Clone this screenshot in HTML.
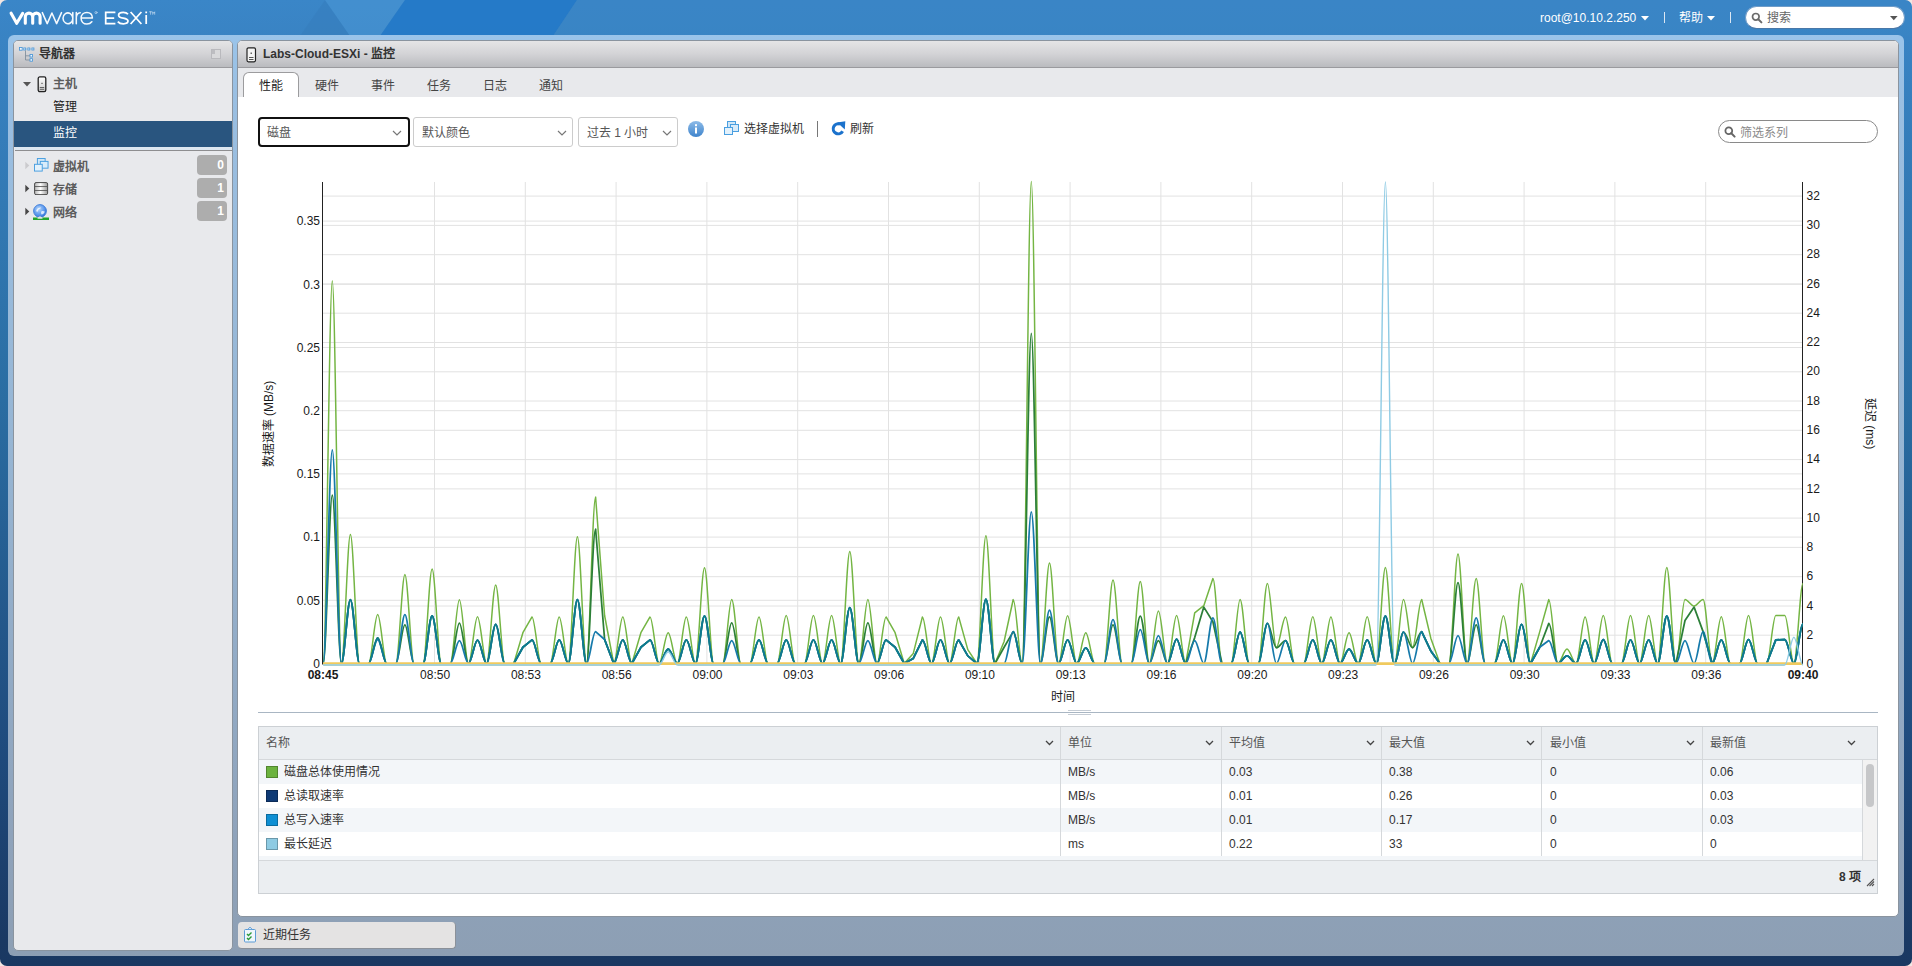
<!DOCTYPE html>
<html lang="zh-CN">
<head>
<meta charset="utf-8">
<title>Labs-Cloud-ESXi - VMware ESXi</title>
<style>
*{box-sizing:border-box;margin:0;padding:0}
html{background:#f3e6e2;font-family:"Liberation Sans",sans-serif}
body{width:1912px;height:966px;position:relative;overflow:hidden;font-family:"Liberation Sans",sans-serif;font-size:12px;color:#333;
 background:linear-gradient(180deg,#3a86c8 0px,#3983c3 40px,#2a6da2 400px,#1f4a7c 760px,#1a3963 940px,#1a3862 966px);border-radius:7px}
.abs{position:absolute}
.t{position:absolute;white-space:nowrap;line-height:14px;height:14px}
/* header */
#hdrbg{left:0;top:0;width:1912px;height:36px;border-radius:7px 7px 0 0;overflow:hidden}
#frame{left:8px;top:35px;width:1896px;height:921px;border-radius:6px;
 background:linear-gradient(180deg,#9ac4ea 0px,#9abfe2 60px,#97b6d4 400px,#8fa3bb 800px,#8d9fb4 921px)}
/* nav */
#nav{left:13px;top:40px;width:220px;height:911px;background:#e8e9ec;border-radius:5px;border:1px solid #8a949f;overflow:hidden}
.phdr{background:linear-gradient(180deg,#e5e5e6 0%,#d3d3d6 50%,#babbbf 100%);border-bottom:1px solid #9a9a9e}
#navh{left:0;top:0;width:218px;height:27px}
#sel{left:0;top:80px;width:218px;height:26px;background:#29557f}
.badge{position:absolute;left:182px;width:30px;height:20px;border-radius:4px;background:#adadad;color:#fff;font-weight:bold;font-size:12px;line-height:20px;text-align:right;padding-right:3px}
.nb{font-weight:bold;color:#5c5c5c}
/* main */
#main{left:237px;top:40px;width:1662px;height:877px;background:#fff;border-radius:5px;overflow:hidden;border:1px solid #8a949f}
#mainh{left:0;top:0;width:1660px;height:27px}
#tabs{left:0;top:27px;width:1660px;height:29px;background:#e8e9ec}
#tabact{left:5px;top:31px;width:56px;height:25px;background:#fff;border:1px solid #9c9c9e;border-bottom:none;border-radius:6px 6px 0 0}
.dd{position:absolute;top:117px;height:30px;border:1px solid #ccc;border-radius:3px;background:#fff}
/* table */
#grid{left:258px;top:726px;width:1620px;height:168px;border:1px solid #ccd0d4;background:#fff}
#gh{left:0;top:0;width:1618px;height:33px;background:#ebeef1;border-bottom:1px solid #d5d8db}
.row{position:absolute;left:0;width:1603px;height:24px}
.alt{background:#f3f6f9}
#gf{left:0;top:133px;width:1618px;height:33px;background:#ebeef1;border-top:1px solid #d5d8db}
.vl{position:absolute;top:0;width:1px;height:133px;background:#d5d8db}
.sw{position:absolute;left:7px;top:6px;width:12px;height:12px;border:1px solid rgba(0,0,0,.25)}
.c{position:absolute;top:5px;line-height:14px;white-space:nowrap;color:#333}
.hc{position:absolute;top:9px;line-height:14px;white-space:nowrap;color:#555}
.chev{position:absolute;top:12px;width:9px;height:9px}
#tasks{left:238px;top:922px;width:218px;height:27px;background:#e4e3e3;border-radius:4px;border-right:1px solid #8b9199;border-bottom:1px solid #8b9199}
.chart{position:absolute;left:0;top:0}
</style>
</head>
<body>
<!-- header background shapes -->
<svg class="abs" id="hdrbg" width="1912" height="36" viewBox="0 0 1912 36">
 <polygon points="300,36 325,0 350,36" fill="#3379b8" opacity=".35"/>
 <polygon points="325,0 405,0 380,36 350,36" fill="#4a97d6" opacity=".55"/>
 <polygon points="405,0 577,0 553,36 380,36" fill="#2479c8" opacity=".9"/>
 <polygon points="577,0 1912,0 1912,36 553,36" fill="#3b85c5" opacity=".6"/>
</svg>

<!-- logo -->
<svg class="abs" style="left:0;top:0" width="170" height="36" viewBox="0 0 170 36" fill="none" stroke="#fff" stroke-linecap="round" stroke-linejoin="round">
 <path d="M11.100 13.200L16.700 23.300L22.700 13.400M25.300 23.300V16.800a3.700 3.700 0 0 1 7.400 0V23.300M32.700 16.800a3.700 3.700 0 0 1 7.400 0V23.300" stroke-width="3.100"/>
 <g stroke-width="1.550" stroke="#f4f9fd">
  <path d="M42.300 12.600L47.200 23.600L51.900 13L56.600 23.600L61.500 12.600"/>
  <path d="M72.800 12.600V23.800M72.800 18.200a4.900 5.400 0 1 0 0 .2"/>
  <path d="M76.300 12.600V23.800M76.300 17.200c.3-2.800 1.800-4.300 3.900-4.500"/>
  <path d="M81.200 18H92.400C92.400 14.600 90 12.400 86.900 12.400C83.600 12.400 81.100 14.800 81.100 18.200C81.100 21.600 83.600 24 86.900 24C89 24 90.700 23.200 91.800 21.700"/>
 </g>
 <circle cx="96" cy="12.600" r="1.100" stroke-width=".6" stroke="#cfe3f5"/>
 <g stroke-width="1.750" stroke-linecap="butt" stroke-linejoin="miter">
  <path d="M115.400 12.400H105.700V23.700H115.400M105.700 18H114.200"/>
  <path d="M128 14.300C127 13 125.300 12.300 123.200 12.300C120.500 12.300 118.600 13.400 118.600 15.200C118.600 17.200 120.600 17.700 123.300 18.100C126.100 18.600 128 19.200 128 21.100C128 22.900 126 23.800 123.400 23.800C121 23.800 119 23.100 117.800 21.600"/>
  <path d="M130.600 12L141.400 24M141.400 12L130.600 24"/>
  <path d="M146.200 15V24M146.200 11.500V13.300"/>
 </g>
 <path d="M149.500 11.800H151.700M150.600 11.800V14.300M152.700 14.300V11.800L153.700 13.300L154.700 11.800V14.300" stroke-width=".6" stroke="#d6e7f6"/>
</svg>

<div class="t" style="left:1540px;top:11px;color:#fff">root@10.10.2.250</div>
<svg class="abs" style="left:1641px;top:16px" width="9" height="5"><path d="M0 0h8l-4 4.5z" fill="#fff"/></svg>
<div class="abs" style="left:1664px;top:12px;width:1px;height:11px;background:#dbe7f3"></div>
<div class="t" style="left:1679px;top:11px;color:#fff">帮助</div>
<svg class="abs" style="left:1707px;top:16px" width="9" height="5"><path d="M0 0h8l-4 4.5z" fill="#fff"/></svg>
<div class="abs" style="left:1730px;top:12px;width:1px;height:11px;background:#dbe7f3"></div>
<div class="abs" style="left:1745px;top:6px;width:160px;height:23px;background:#fff;border-radius:11.5px;border:1px solid #6f9cc8;border-bottom-color:#4a78a8"></div>
<svg class="abs" style="left:1751px;top:12px" width="12" height="12" viewBox="0 0 12 12"><circle cx="4.800" cy="4.800" r="3.300" fill="none" stroke="#6a6a6a" stroke-width="1.700"/><path d="M7.300 7.300L10.400 10.400" stroke="#6a6a6a" stroke-width="2" stroke-linecap="round"/></svg>
<div class="t" style="left:1767px;top:11px;color:#666">搜索</div>
<svg class="abs" style="left:1890.3px;top:16px" width="9" height="5"><path d="M0 0h7.600l-3.800 4.200z" fill="#555"/></svg>

<div class="abs" id="frame"></div>

<!-- navigator -->
<div class="abs" id="nav">
 <div class="abs phdr" id="navh"></div>
 <div class="abs" id="sel"></div>
 <div class="abs" style="left:1px;top:0">
 <svg class="abs" style="left:4px;top:5px" width="17" height="17" viewBox="0 0 17 17" fill="#f4f9fd" stroke="#4794d6" stroke-width=".85">
  <rect x=".5" y="1.5" width="2.700" height="2.700"/><rect x="4.700" y="2" width="2" height="2"/><rect x="8.800" y="2" width="2" height="2"/><rect x="12.900" y="2" width="2" height="2"/>
  <path d="M3.200 3H4.700M6.700 3H8.800M10.800 3H12.900" stroke="#8fbfe6"/>
  <path d="M6.500 4.500V14H11M6.500 9.800H11" stroke="#7d8c9b" fill="none"/><rect x="11" y="8.500" width="2.500" height="2.500"/><rect x="11" y="12.700" width="2.500" height="2.500"/>
 </svg>
 <div class="t" style="left:24px;top:6px;font-weight:bold;color:#333">导航器</div>
 <svg class="abs" style="left:196px;top:8px" width="11" height="11" viewBox="0 0 11 11"><rect x=".5" y=".5" width="9" height="9" fill="#d9d9db" stroke="#b9b9bd"/><rect x="1" y="1" width="3" height="4" fill="#bdbdc1"/></svg>

 <svg class="abs" style="left:8px;top:41px" width="9" height="5"><path d="M0 0h8l-4 4.5z" fill="#555"/></svg>
 <svg class="abs" style="left:22px;top:34.5px" width="11" height="17" viewBox="0 0 11 17"><defs><linearGradient id="hg" x1="0" y1="0" x2="0" y2="1"><stop offset="0" stop-color="#fff"/><stop offset="1" stop-color="#c9c9c9"/></linearGradient></defs><rect x="1.200" y=".9" width="7.600" height="14.800" rx="1.600" fill="url(#hg)" stroke="#222" stroke-width="1.300"/><path d="M2.800 11.500h4.400M2.800 13.300h4.400" stroke="#555" stroke-width=".9"/><rect x="4.400" y="6.800" width="1.200" height="1.200" fill="#555"/></svg>
 <div class="t nb" style="left:38px;top:36px">主机</div>
 <div class="t" style="left:38px;top:59px;color:#222">管理</div>
 <div class="t" style="left:38px;top:85px;color:#fff">监控</div>
 <div class="abs" style="left:0;top:106px;width:218px;height:3px;background:#dde7f1"></div>
 <div class="abs" style="left:0;top:109px;width:218px;height:1px;background:#8e8e90"></div>

 <svg class="abs" style="left:10px;top:119.5px" width="5" height="9"><path d="M.3 .8l4 3.700L.3 8.200z" fill="#cbcbce"/></svg>
 <svg class="abs" style="left:18.500px;top:117.300px" width="15.500" height="15.500" viewBox="0 0 16 16"><rect x="3.5" y=".5" width="8" height="7" fill="#cfe6f7" stroke="#4a9fe0"/><rect x="6.5" y="3.5" width="8" height="7" fill="#d9ecfa" stroke="#4a9fe0"/><rect x=".5" y="6.5" width="8" height="7" fill="#e3f1fb" stroke="#4a9fe0"/></svg>
 <div class="t nb" style="left:38px;top:119px">虚拟机</div>
 <div class="badge" style="top:114px">0</div>

 <svg class="abs" style="left:10px;top:142.5px" width="5" height="9"><path d="M.3 .8l4 3.700L.3 8.200z" fill="#484848"/></svg>
 <svg class="abs" style="left:19px;top:140.500px" width="14.500" height="13.500" viewBox="0 0 15 14"><defs><linearGradient id="stg" x1="0" x2="1"><stop offset="0" stop-color="#b5b5b5"/><stop offset=".45" stop-color="#fff"/><stop offset="1" stop-color="#9a9a9a"/></linearGradient></defs><rect x=".6" y=".6" width="13.500" height="12.500" rx="1.500" fill="url(#stg)" stroke="#444" stroke-width="1"/><path d="M1 4.700h13M1 8.800h13" stroke="#555" stroke-width=".9"/></svg>
 <div class="t nb" style="left:38px;top:142px">存储</div>
 <div class="badge" style="top:137px">1</div>

 <svg class="abs" style="left:10px;top:165.5px" width="5" height="9"><path d="M.3 .8l4 3.700L.3 8.200z" fill="#484848"/></svg>
 <svg class="abs" style="left:16.500px;top:161.500px" width="18" height="18" viewBox="0 0 18 18"><defs><radialGradient id="gg" cx=".4" cy=".35" r=".7"><stop offset="0" stop-color="#b7d6fa"/><stop offset=".6" stop-color="#5f9bee"/><stop offset="1" stop-color="#2f6fd6"/></radialGradient></defs><circle cx="8" cy="8" r="6.400" fill="url(#gg)" stroke="#3b7bd8" stroke-width=".9"/><path d="M4.200 7.500c.8-2 2.600-3.200 4.800-3-.3 1.200-1.300 1.300-2.300 2-.9.700-.3 1.800-1.300 2.300-.6.200-1-.5-1.200-1.300z" fill="#eef5fe" opacity=".9"/><path d="M9.500 8.200c1.400-.6 2.600-.3 3.300.6-.6 1.700-1.900 2.500-3.200 2.600-.6-.9-.8-2.200-.1-3.200z" fill="#eef5fe" opacity=".85"/><rect x="1" y="14.500" width="16" height="2.500" fill="#22a52e"/><path d="M5.500 14.500l2.500-1.300 2.500 1.300v1.200h-5z" fill="#e4e4e4"/></svg>
 <div class="t nb" style="left:38px;top:165px">网络</div>
 <div class="badge" style="top:160px">1</div>
 </div>
</div>

<!-- main panel -->
<div class="abs" id="main">
 <div class="abs phdr" id="mainh"></div>
 <div class="abs" id="tabs"></div>
 <div class="abs" style="left:0;top:0">
 <svg class="abs" style="left:8px;top:6px" width="11" height="16" viewBox="0 0 11 16"><rect x="1" y=".8" width="8.500" height="14" rx="1.500" fill="#f4f4f4" stroke="#222" stroke-width="1.200"/><path d="M3 10.500h4.500M3 12.500h4.500" stroke="#555" stroke-width="1"/><rect x="4.500" y="5.500" width="1.500" height="1.500" fill="#666"/></svg>
 <div class="t" style="left:25px;top:6px;font-weight:bold;color:#333">Labs-Cloud-ESXi - 监控</div>
 <div class="abs" id="tabact"></div>
 <div class="t" style="left:21px;top:38px;color:#222">性能</div>
 <div class="t" style="left:77px;top:38px;color:#444">硬件</div>
 <div class="t" style="left:133px;top:38px;color:#444">事件</div>
 <div class="t" style="left:189px;top:38px;color:#444">任务</div>
 <div class="t" style="left:245px;top:38px;color:#444">日志</div>
 <div class="t" style="left:301px;top:38px;color:#444">通知</div>
 </div>
</div>

<!-- toolbar -->
<div class="dd" style="left:258px;width:152px;border:2px solid #111;border-radius:4px"></div>
<div class="t" style="left:267px;top:125.5px;color:#555">磁盘</div>
<svg class="abs" style="left:392px;top:130px" width="10" height="7"><path d="M1 1l4 4 4-4" fill="none" stroke="#777" stroke-width="1.200"/></svg>
<div class="dd" style="left:413px;width:160px"></div>
<div class="t" style="left:422px;top:125.5px;color:#555">默认颜色</div>
<svg class="abs" style="left:557px;top:130px" width="10" height="7"><path d="M1 1l4 4 4-4" fill="none" stroke="#777" stroke-width="1.200"/></svg>
<div class="dd" style="left:578px;width:100px"></div>
<div class="t" style="left:587px;top:125.5px;color:#555">过去 1 小时</div>
<svg class="abs" style="left:662px;top:130px" width="10" height="7"><path d="M1 1l4 4 4-4" fill="none" stroke="#777" stroke-width="1.200"/></svg>
<svg class="abs" style="left:687px;top:120px" width="18" height="18" viewBox="0 0 18 18"><defs><linearGradient id="ig" x1="0" y1="0" x2="0" y2="1"><stop offset="0" stop-color="#8dbbe8"/><stop offset="1" stop-color="#3f84cc"/></linearGradient></defs><circle cx="9" cy="9" r="8" fill="url(#ig)"/><rect x="8" y="7.500" width="2" height="6" fill="#fff"/><rect x="8" y="4.200" width="2" height="2" fill="#fff"/></svg>
<svg class="abs" style="left:724px;top:121px" width="16" height="16" viewBox="0 0 16 16"><rect x="3.500" y=".5" width="8" height="7" fill="#cfe6f7" stroke="#4a9fe0"/><rect x="6.500" y="3.500" width="8" height="7" fill="#d9ecfa" stroke="#4a9fe0"/><rect x=".5" y="6.500" width="8" height="7" fill="#e3f1fb" stroke="#4a9fe0"/></svg>
<div class="t" style="left:744px;top:122px;color:#333">选择虚拟机</div>
<div class="abs" style="left:817px;top:121px;width:1px;height:16px;background:#777"></div>
<svg class="abs" style="left:830px;top:120px" width="16" height="16" viewBox="0 0 16 16"><path d="M12.600 11.200A5 5 0 1 1 10.200 4.200" fill="none" stroke="#1b72cc" stroke-width="3.100"/><path d="M7.200 2.600L15.300 1.300L14.800 9.400z" fill="#1b72cc"/></svg>
<div class="t" style="left:850px;top:122px;color:#333">刷新</div>
<div class="abs" style="left:1718px;top:120px;width:160px;height:23px;border:1px solid #8a8a8a;border-radius:12px;background:#fff"></div>
<svg class="abs" style="left:1724px;top:125.5px" width="12" height="12" viewBox="0 0 12 12"><circle cx="4.800" cy="4.800" r="3.400" fill="none" stroke="#666" stroke-width="1.800"/><path d="M7.300 7.300L10.600 10.600" stroke="#666" stroke-width="2" stroke-linecap="round"/></svg>
<div class="t" style="left:1740px;top:125.5px;color:#8a8a8a">筛选系列</div>

<svg class="chart" width="1912" height="966" viewBox="0 0 1912 966"><g stroke="#e2e2e2" stroke-width="1" shape-rendering="auto"><line x1="323" x2="1802" y1="600.3" y2="600.3"/><line x1="323" x2="1802" y1="537.1" y2="537.1"/><line x1="323" x2="1802" y1="473.9" y2="473.9"/><line x1="323" x2="1802" y1="410.7" y2="410.7"/><line x1="323" x2="1802" y1="347.5" y2="347.5"/><line x1="323" x2="1802" y1="284.3" y2="284.3"/><line x1="323" x2="1802" y1="221.1" y2="221.1"/><line x1="323" x2="1802" y1="635.2" y2="635.2"/><line x1="323" x2="1802" y1="606.0" y2="606.0"/><line x1="323" x2="1802" y1="576.7" y2="576.7"/><line x1="323" x2="1802" y1="547.4" y2="547.4"/><line x1="323" x2="1802" y1="518.1" y2="518.1"/><line x1="323" x2="1802" y1="488.9" y2="488.9"/><line x1="323" x2="1802" y1="459.6" y2="459.6"/><line x1="323" x2="1802" y1="430.3" y2="430.3"/><line x1="323" x2="1802" y1="401.0" y2="401.0"/><line x1="323" x2="1802" y1="371.8" y2="371.8"/><line x1="323" x2="1802" y1="342.5" y2="342.5"/><line x1="323" x2="1802" y1="313.2" y2="313.2"/><line x1="323" x2="1802" y1="283.9" y2="283.9"/><line x1="323" x2="1802" y1="254.7" y2="254.7"/><line x1="323" x2="1802" y1="225.4" y2="225.4"/><line x1="323" x2="1802" y1="196.1" y2="196.1"/><line x1="434.5" x2="434.5" y1="182" y2="664"/><line x1="525.3" x2="525.3" y1="182" y2="664"/><line x1="616.1" x2="616.1" y1="182" y2="664"/><line x1="706.9" x2="706.9" y1="182" y2="664"/><line x1="797.7" x2="797.7" y1="182" y2="664"/><line x1="888.5" x2="888.5" y1="182" y2="664"/><line x1="979.3" x2="979.3" y1="182" y2="664"/><line x1="1070.1" x2="1070.1" y1="182" y2="664"/><line x1="1160.9" x2="1160.9" y1="182" y2="664"/><line x1="1251.7" x2="1251.7" y1="182" y2="664"/><line x1="1342.5" x2="1342.5" y1="182" y2="664"/><line x1="1433.3" x2="1433.3" y1="182" y2="664"/><line x1="1524.1" x2="1524.1" y1="182" y2="664"/><line x1="1614.9" x2="1614.9" y1="182" y2="664"/><line x1="1705.7" x2="1705.7" y1="182" y2="664"/></g><path d="M322.5 182V664.5M1802.5 182V664.5" stroke="#222" stroke-width="1" fill="none"/><g fill="none" stroke-linejoin="round" stroke-linecap="butt"><path d="M323.2 663.5C326.2 663.5 329.3 280.8 332.3 280.8C335.3 280.8 338.3 663.5 341.4 663.5C344.4 663.5 347.4 534.6 350.4 534.6C353.5 534.6 356.5 663.5 359.5 663.5M368.6 663.5C371.6 663.5 374.6 614.6 377.7 614.6C380.7 614.6 383.7 663.5 386.7 663.5M395.8 663.5C398.9 663.5 401.9 574.6 404.9 574.6C407.9 574.6 411.0 663.5 414.0 663.5M423.1 663.5C426.1 663.5 429.1 569.0 432.1 569.0C435.2 569.0 438.2 663.5 441.2 663.5M450.3 663.5C453.3 663.5 456.4 599.7 459.4 599.7C462.4 599.7 465.4 663.5 468.5 663.5C471.5 663.5 474.5 616.7 477.5 616.7C480.6 616.7 483.6 663.5 486.6 663.5C489.6 663.5 492.7 584.9 495.7 584.9C498.7 584.9 501.7 663.5 504.8 663.5M513.8 663.5L522.9 632.7L532.0 616.9C535.0 616.9 538.1 663.5 541.1 663.5M550.2 663.5C553.2 663.5 556.2 616.9 559.2 616.9C562.3 616.9 565.3 663.5 568.3 663.5C571.3 663.5 574.4 536.8 577.4 536.8C580.4 536.8 583.5 663.5 586.5 663.5C589.5 663.5 592.5 497.0 595.6 497.0L604.6 615.5L613.7 663.5C616.7 663.5 619.8 616.9 622.8 616.9C625.8 616.9 628.8 663.5 631.9 663.5L640.9 632.7L650.0 616.9C653.1 616.9 656.1 663.5 659.1 663.5C662.1 663.5 665.2 632.7 668.2 632.7C671.2 632.7 674.2 663.5 677.3 663.5C680.3 663.5 683.3 616.9 686.3 616.9C689.4 616.9 692.4 663.5 695.4 663.5C698.4 663.5 701.5 567.8 704.5 567.8C707.5 567.8 710.6 663.5 713.6 663.5M722.7 663.5C725.7 663.5 728.7 599.5 731.7 599.5C734.8 599.5 737.8 663.5 740.8 663.5M749.9 663.5C752.9 663.5 755.9 616.9 759.0 616.9C762.0 616.9 765.0 663.5 768.0 663.5M777.1 663.5C780.2 663.5 783.2 615.5 786.2 615.5C789.2 615.5 792.3 663.5 795.3 663.5M804.4 663.5C807.4 663.5 810.4 615.5 813.4 615.5C816.5 615.5 819.5 663.5 822.5 663.5C825.5 663.5 828.6 615.5 831.6 615.5C834.6 615.5 837.6 663.5 840.7 663.5C843.7 663.5 846.7 551.4 849.8 551.4C852.8 551.4 855.8 663.5 858.8 663.5C861.9 663.5 864.9 599.5 867.9 599.5C870.9 599.5 874.0 663.5 877.0 663.5C880.0 663.5 883.0 616.9 886.1 616.9L895.1 632.7L904.2 663.5L913.3 653.4L922.4 616.9C925.4 616.9 928.4 663.5 931.5 663.5C934.5 663.5 937.5 616.9 940.5 616.9C943.6 616.9 946.6 663.5 949.6 663.5C952.6 663.5 955.7 616.9 958.7 616.9L967.8 649.6L976.9 663.5C979.9 663.5 982.9 535.8 985.9 535.8C989.0 535.8 992.0 663.5 995.0 663.5L1004.1 641.5L1013.2 599.5C1016.2 599.5 1019.2 663.5 1022.2 663.5C1025.3 663.5 1028.3 181.5 1031.3 181.5C1034.4 181.5 1037.4 663.5 1040.4 663.5C1043.4 663.5 1046.5 562.9 1049.5 562.9C1052.5 562.9 1055.5 663.5 1058.6 663.5C1061.6 663.5 1064.6 615.8 1067.6 615.8C1070.7 615.8 1073.7 663.5 1076.7 663.5C1079.7 663.5 1082.8 632.7 1085.8 632.7C1088.8 632.7 1091.8 663.5 1094.9 663.5M1104.0 663.5C1107.0 663.5 1110.0 580.1 1113.0 580.1C1116.1 580.1 1119.1 663.5 1122.1 663.5M1131.2 663.5C1134.2 663.5 1137.2 581.5 1140.3 581.5C1143.3 581.5 1146.3 663.5 1149.3 663.5C1152.4 663.5 1155.4 611.0 1158.4 611.0C1161.5 611.0 1164.5 663.5 1167.5 663.5C1170.5 663.5 1173.6 615.5 1176.6 615.5C1179.6 615.5 1182.6 663.5 1185.7 663.5L1194.7 612.9L1203.8 605.7L1212.9 578.6C1215.9 578.6 1218.9 663.5 1222.0 663.5M1231.1 663.5C1234.1 663.5 1237.1 599.5 1240.1 599.5C1243.2 599.5 1246.2 663.5 1249.2 663.5M1258.3 663.5C1261.3 663.5 1264.3 583.5 1267.4 583.5C1270.4 583.5 1273.4 647.1 1276.4 647.1C1279.5 647.1 1282.5 616.9 1285.5 616.9C1288.6 616.9 1291.6 663.5 1294.6 663.5M1303.7 663.5C1306.7 663.5 1309.7 616.7 1312.8 616.7C1315.8 616.7 1318.8 663.5 1321.8 663.5C1324.9 663.5 1327.9 616.9 1330.9 616.9C1333.9 616.9 1337.0 663.5 1340.0 663.5C1343.0 663.5 1346.0 632.7 1349.1 632.7C1352.1 632.7 1355.1 663.5 1358.2 663.5C1361.2 663.5 1364.2 616.7 1367.2 616.7C1370.3 616.7 1373.3 663.5 1376.3 663.5C1379.3 663.5 1382.4 567.4 1385.4 567.4C1388.4 567.4 1391.4 663.5 1394.5 663.5C1397.5 663.5 1400.5 599.5 1403.5 599.5C1406.6 599.5 1409.6 647.3 1412.6 647.3C1415.6 647.3 1418.7 599.5 1421.7 599.5L1430.8 638.2L1439.9 663.5M1448.9 663.5C1452.0 663.5 1455.0 554.0 1458.0 554.0C1461.0 554.0 1464.1 663.5 1467.1 663.5C1470.1 663.5 1473.1 578.6 1476.2 578.6C1479.2 578.6 1482.2 663.5 1485.3 663.5M1494.3 663.5C1497.4 663.5 1500.4 615.8 1503.4 615.8C1506.4 615.8 1509.5 663.5 1512.5 663.5C1515.5 663.5 1518.5 583.5 1521.6 583.5C1524.6 583.5 1527.6 663.5 1530.6 663.5L1539.7 631.9L1548.8 599.5C1551.8 599.5 1554.9 663.5 1557.9 663.5C1560.9 663.5 1563.9 649.0 1567.0 649.0C1570.0 649.0 1573.0 663.5 1576.0 663.5C1579.1 663.5 1582.1 616.9 1585.1 616.9C1588.1 616.9 1591.2 663.5 1594.2 663.5C1597.2 663.5 1600.2 615.5 1603.3 615.5C1606.3 615.5 1609.3 663.5 1612.4 663.5M1621.4 663.5C1624.5 663.5 1627.5 615.5 1630.5 615.5C1633.5 615.5 1636.6 663.5 1639.6 663.5C1642.6 663.5 1645.6 615.5 1648.7 615.5C1651.7 615.5 1654.7 663.5 1657.7 663.5C1660.8 663.5 1663.8 567.4 1666.8 567.4C1669.8 567.4 1672.9 663.5 1675.9 663.5C1678.9 663.5 1682.0 599.5 1685.0 599.5C1688.0 599.5 1691.0 606.1 1694.1 606.1C1697.1 606.1 1700.1 599.5 1703.1 599.5C1706.2 599.5 1709.2 663.5 1712.2 663.5C1715.2 663.5 1718.3 616.7 1721.3 616.7C1724.3 616.7 1727.3 663.5 1730.4 663.5M1739.5 663.5C1742.5 663.5 1745.5 615.5 1748.5 615.5C1751.6 615.5 1754.6 663.5 1757.6 663.5M1766.7 663.5C1769.7 663.5 1772.7 615.5 1775.8 615.5L1784.8 615.5C1787.9 615.5 1790.9 663.5 1793.9 663.5C1796.9 663.5 1800.0 583.5 1803.0 583.5" stroke="#74b543" stroke-width="1.5"/><path d="M323.2 663.5C326.2 663.5 329.3 495.0 332.3 495.0C335.3 495.0 338.3 663.5 341.4 663.5C344.4 663.5 347.4 599.7 350.4 599.7C353.5 599.7 356.5 663.5 359.5 663.5M368.6 663.5C371.6 663.5 374.6 637.8 377.7 637.8C380.7 637.8 383.7 663.5 386.7 663.5M395.8 663.5C398.9 663.5 401.9 624.8 404.9 624.8C407.9 624.8 411.0 663.5 414.0 663.5M423.1 663.5C426.1 663.5 429.1 615.8 432.1 615.8C435.2 615.8 438.2 663.5 441.2 663.5M450.3 663.5C453.3 663.5 456.4 623.1 459.4 623.1C462.4 623.1 465.4 663.5 468.5 663.5C471.5 663.5 474.5 640.1 477.5 640.1C480.6 640.1 483.6 663.5 486.6 663.5C489.6 663.5 492.7 624.3 495.7 624.3C498.7 624.3 501.7 663.5 504.8 663.5M513.8 663.5L522.9 647.3L532.0 639.9C535.0 639.9 538.1 663.5 541.1 663.5M550.2 663.5C553.2 663.5 556.2 639.9 559.2 639.9C562.3 639.9 565.3 663.5 568.3 663.5C571.3 663.5 574.4 599.5 577.4 599.5C580.4 599.5 583.5 663.5 586.5 663.5C589.5 663.5 592.5 529.0 595.6 529.0L604.6 639.5L613.7 663.5C616.7 663.5 619.8 639.9 622.8 639.9C625.8 639.9 628.8 663.5 631.9 663.5L640.9 647.3L650.0 639.9C653.1 639.9 656.1 663.5 659.1 663.5C662.1 663.5 665.2 649.0 668.2 649.0C671.2 649.0 674.2 663.5 677.3 663.5C680.3 663.5 683.3 639.9 686.3 639.9C689.4 639.9 692.4 663.5 695.4 663.5C698.4 663.5 701.5 616.0 704.5 616.0C707.5 616.0 710.6 663.5 713.6 663.5M722.7 663.5C725.7 663.5 728.7 622.8 731.7 622.8C734.8 622.8 737.8 663.5 740.8 663.5M749.9 663.5C752.9 663.5 755.9 639.9 759.0 639.9C762.0 639.9 765.0 663.5 768.0 663.5M777.1 663.5C780.2 663.5 783.2 639.9 786.2 639.9C789.2 639.9 792.3 663.5 795.3 663.5M804.4 663.5C807.4 663.5 810.4 639.9 813.4 639.9C816.5 639.9 819.5 663.5 822.5 663.5C825.5 663.5 828.6 639.9 831.6 639.9C834.6 639.9 837.6 663.5 840.7 663.5C843.7 663.5 846.7 607.6 849.8 607.6C852.8 607.6 855.8 663.5 858.8 663.5C861.9 663.5 864.9 622.8 867.9 622.8C870.9 622.8 874.0 663.5 877.0 663.5C880.0 663.5 883.0 639.9 886.1 639.9L895.1 647.3L904.2 663.5L913.3 658.4L922.4 639.9C925.4 639.9 928.4 663.5 931.5 663.5C934.5 663.5 937.5 639.9 940.5 639.9C943.6 639.9 946.6 663.5 949.6 663.5C952.6 663.5 955.7 639.9 958.7 639.9L967.8 655.9L976.9 663.5C979.9 663.5 982.9 599.2 985.9 599.2C989.0 599.2 992.0 663.5 995.0 663.5L1004.1 647.3L1013.2 631.6C1016.2 631.6 1019.2 663.5 1022.2 663.5C1025.3 663.5 1028.3 333.3 1031.3 333.3C1034.4 333.3 1037.4 663.5 1040.4 663.5C1043.4 663.5 1046.5 616.9 1049.5 616.9C1052.5 616.9 1055.5 663.5 1058.6 663.5C1061.6 663.5 1064.6 639.9 1067.6 639.9C1070.7 639.9 1073.7 663.5 1076.7 663.5C1079.7 663.5 1082.8 647.8 1085.8 647.8C1088.8 647.8 1091.8 663.5 1094.9 663.5M1104.0 663.5C1107.0 663.5 1110.0 624.8 1113.0 624.8C1116.1 624.8 1119.1 663.5 1122.1 663.5M1131.2 663.5C1134.2 663.5 1137.2 616.0 1140.3 616.0C1143.3 616.0 1146.3 663.5 1149.3 663.5C1152.4 663.5 1155.4 640.5 1158.4 640.5C1161.5 640.5 1164.5 663.5 1167.5 663.5C1170.5 663.5 1173.6 639.1 1176.6 639.1C1179.6 639.1 1182.6 663.5 1185.7 663.5L1194.7 637.6L1203.8 607.1L1212.9 621.8L1222.0 663.5M1231.1 663.5C1234.1 663.5 1237.1 632.0 1240.1 632.0C1243.2 632.0 1246.2 663.5 1249.2 663.5M1258.3 663.5C1261.3 663.5 1264.3 623.4 1267.4 623.4C1270.4 623.4 1273.4 647.8 1276.4 647.8C1279.5 647.8 1282.5 640.5 1285.5 640.5C1288.6 640.5 1291.6 663.5 1294.6 663.5M1303.7 663.5C1306.7 663.5 1309.7 639.9 1312.8 639.9C1315.8 639.9 1318.8 663.5 1321.8 663.5C1324.9 663.5 1327.9 639.9 1330.9 639.9C1333.9 639.9 1337.0 663.5 1340.0 663.5C1343.0 663.5 1346.0 649.0 1349.1 649.0C1352.1 649.0 1355.1 663.5 1358.2 663.5C1361.2 663.5 1364.2 639.9 1367.2 639.9C1370.3 639.9 1373.3 663.5 1376.3 663.5C1379.3 663.5 1382.4 616.0 1385.4 616.0C1388.4 616.0 1391.4 663.5 1394.5 663.5C1397.5 663.5 1400.5 632.0 1403.5 632.0C1406.6 632.0 1409.6 647.8 1412.6 647.8C1415.6 647.8 1418.7 631.6 1421.7 631.6L1430.8 650.9L1439.9 663.5M1448.9 663.5C1452.0 663.5 1455.0 582.5 1458.0 582.5C1461.0 582.5 1464.1 663.5 1467.1 663.5C1470.1 663.5 1473.1 624.8 1476.2 624.8C1479.2 624.8 1482.2 663.5 1485.3 663.5M1494.3 663.5C1497.4 663.5 1500.4 639.9 1503.4 639.9C1506.4 639.9 1509.5 663.5 1512.5 663.5C1515.5 663.5 1518.5 624.3 1521.6 624.3C1524.6 624.3 1527.6 663.5 1530.6 663.5L1539.7 647.3L1548.8 623.4C1551.8 623.4 1554.9 663.5 1557.9 663.5C1560.9 663.5 1563.9 655.9 1567.0 655.9C1570.0 655.9 1573.0 663.5 1576.0 663.5C1579.1 663.5 1582.1 639.9 1585.1 639.9C1588.1 639.9 1591.2 663.5 1594.2 663.5C1597.2 663.5 1600.2 639.5 1603.3 639.5C1606.3 639.5 1609.3 663.5 1612.4 663.5M1621.4 663.5C1624.5 663.5 1627.5 639.9 1630.5 639.9C1633.5 639.9 1636.6 663.5 1639.6 663.5C1642.6 663.5 1645.6 639.9 1648.7 639.9C1651.7 639.9 1654.7 663.5 1657.7 663.5C1660.8 663.5 1663.8 616.0 1666.8 616.0C1669.8 616.0 1672.9 663.5 1675.9 663.5L1685.0 620.5L1694.1 607.1L1703.1 631.6L1712.2 663.5C1715.2 663.5 1718.3 639.9 1721.3 639.9C1724.3 639.9 1727.3 663.5 1730.4 663.5M1739.5 663.5C1742.5 663.5 1745.5 639.5 1748.5 639.5C1751.6 639.5 1754.6 663.5 1757.6 663.5M1766.7 663.5L1775.8 639.9L1784.8 639.5C1787.9 639.5 1790.9 663.5 1793.9 663.5C1796.9 663.5 1800.0 623.8 1803.0 623.8" stroke="#2c7f38" stroke-width="1.75"/><path d="M323.2 663.5C326.2 663.5 329.3 449.9 332.3 449.9C335.3 449.9 338.3 663.5 341.4 663.5C344.4 663.5 347.4 599.7 350.4 599.7C353.5 599.7 356.5 663.5 359.5 663.5M368.6 663.5C371.6 663.5 374.6 639.5 377.7 639.5C380.7 639.5 383.7 663.5 386.7 663.5M395.8 663.5C398.9 663.5 401.9 614.6 404.9 614.6C407.9 614.6 411.0 663.5 414.0 663.5M423.1 663.5C426.1 663.5 429.1 615.8 432.1 615.8C435.2 615.8 438.2 663.5 441.2 663.5M450.3 663.5C453.3 663.5 456.4 640.7 459.4 640.7C462.4 640.7 465.4 663.5 468.5 663.5C471.5 663.5 474.5 640.1 477.5 640.1C480.6 640.1 483.6 663.5 486.6 663.5C489.6 663.5 492.7 624.3 495.7 624.3C498.7 624.3 501.7 663.5 504.8 663.5M513.8 663.5L522.9 647.3L532.0 639.9C535.0 639.9 538.1 663.5 541.1 663.5M550.2 663.5C553.2 663.5 556.2 639.9 559.2 639.9C562.3 639.9 565.3 663.5 568.3 663.5C571.3 663.5 574.4 599.5 577.4 599.5C580.4 599.5 583.5 663.5 586.5 663.5C589.5 663.5 592.5 631.6 595.6 631.6L604.6 639.5L613.7 663.5C616.7 663.5 619.8 639.9 622.8 639.9C625.8 639.9 628.8 663.5 631.9 663.5L640.9 647.3L650.0 639.9C653.1 639.9 656.1 663.5 659.1 663.5C662.1 663.5 665.2 649.0 668.2 649.0C671.2 649.0 674.2 663.5 677.3 663.5C680.3 663.5 683.3 639.9 686.3 639.9C689.4 639.9 692.4 663.5 695.4 663.5C698.4 663.5 701.5 616.0 704.5 616.0C707.5 616.0 710.6 663.5 713.6 663.5M722.7 663.5C725.7 663.5 728.7 640.5 731.7 640.5C734.8 640.5 737.8 663.5 740.8 663.5M749.9 663.5C752.9 663.5 755.9 639.9 759.0 639.9C762.0 639.9 765.0 663.5 768.0 663.5M777.1 663.5C780.2 663.5 783.2 639.9 786.2 639.9C789.2 639.9 792.3 663.5 795.3 663.5M804.4 663.5C807.4 663.5 810.4 639.9 813.4 639.9C816.5 639.9 819.5 663.5 822.5 663.5C825.5 663.5 828.6 639.9 831.6 639.9C834.6 639.9 837.6 663.5 840.7 663.5C843.7 663.5 846.7 607.6 849.8 607.6C852.8 607.6 855.8 663.5 858.8 663.5C861.9 663.5 864.9 640.5 867.9 640.5C870.9 640.5 874.0 663.5 877.0 663.5C880.0 663.5 883.0 639.9 886.1 639.9L895.1 647.3L904.2 663.5L913.3 658.4L922.4 639.9C925.4 639.9 928.4 663.5 931.5 663.5C934.5 663.5 937.5 639.9 940.5 639.9C943.6 639.9 946.6 663.5 949.6 663.5C952.6 663.5 955.7 639.9 958.7 639.9L967.8 655.9L976.9 663.5C979.9 663.5 982.9 599.2 985.9 599.2C989.0 599.2 992.0 663.5 995.0 663.5M1004.1 663.5C1007.1 663.5 1010.1 631.6 1013.2 631.6C1016.2 631.6 1019.2 663.5 1022.2 663.5C1025.3 663.5 1028.3 511.8 1031.3 511.8C1034.4 511.8 1037.4 663.5 1040.4 663.5C1043.4 663.5 1046.5 610.0 1049.5 610.0C1052.5 610.0 1055.5 663.5 1058.6 663.5C1061.6 663.5 1064.6 639.9 1067.6 639.9C1070.7 639.9 1073.7 663.5 1076.7 663.5C1079.7 663.5 1082.8 647.8 1085.8 647.8C1088.8 647.8 1091.8 663.5 1094.9 663.5M1104.0 663.5C1107.0 663.5 1110.0 619.5 1113.0 619.5C1116.1 619.5 1119.1 663.5 1122.1 663.5M1131.2 663.5C1134.2 663.5 1137.2 629.6 1140.3 629.6C1143.3 629.6 1146.3 663.5 1149.3 663.5C1152.4 663.5 1155.4 635.6 1158.4 635.6C1161.5 635.6 1164.5 663.5 1167.5 663.5C1170.5 663.5 1173.6 639.1 1176.6 639.1C1179.6 639.1 1182.6 663.5 1185.7 663.5C1188.7 663.5 1191.7 640.5 1194.7 640.5C1197.8 640.5 1200.8 663.5 1203.8 663.5C1206.8 663.5 1209.9 617.9 1212.9 617.9C1215.9 617.9 1218.9 663.5 1222.0 663.5M1231.1 663.5C1234.1 663.5 1237.1 632.0 1240.1 632.0C1243.2 632.0 1246.2 663.5 1249.2 663.5M1258.3 663.5C1261.3 663.5 1264.3 623.4 1267.4 623.4C1270.4 623.4 1273.4 663.5 1276.4 663.5C1279.5 663.5 1282.5 640.5 1285.5 640.5C1288.6 640.5 1291.6 663.5 1294.6 663.5M1303.7 663.5C1306.7 663.5 1309.7 639.9 1312.8 639.9C1315.8 639.9 1318.8 663.5 1321.8 663.5C1324.9 663.5 1327.9 639.9 1330.9 639.9C1333.9 639.9 1337.0 663.5 1340.0 663.5C1343.0 663.5 1346.0 649.0 1349.1 649.0C1352.1 649.0 1355.1 663.5 1358.2 663.5C1361.2 663.5 1364.2 639.9 1367.2 639.9C1370.3 639.9 1373.3 663.5 1376.3 663.5C1379.3 663.5 1382.4 616.0 1385.4 616.0C1388.4 616.0 1391.4 663.5 1394.5 663.5C1397.5 663.5 1400.5 632.0 1403.5 632.0C1406.6 632.0 1409.6 663.5 1412.6 663.5C1415.6 663.5 1418.7 631.6 1421.7 631.6L1430.8 650.9L1439.9 663.5M1448.9 663.5C1452.0 663.5 1455.0 635.6 1458.0 635.6C1461.0 635.6 1464.1 663.5 1467.1 663.5C1470.1 663.5 1473.1 617.9 1476.2 617.9C1479.2 617.9 1482.2 663.5 1485.3 663.5M1494.3 663.5C1497.4 663.5 1500.4 639.9 1503.4 639.9C1506.4 639.9 1509.5 663.5 1512.5 663.5C1515.5 663.5 1518.5 624.3 1521.6 624.3C1524.6 624.3 1527.6 663.5 1530.6 663.5L1539.7 647.3L1548.8 640.5C1551.8 640.5 1554.9 663.5 1557.9 663.5C1560.9 663.5 1563.9 655.9 1567.0 655.9C1570.0 655.9 1573.0 663.5 1576.0 663.5C1579.1 663.5 1582.1 639.9 1585.1 639.9C1588.1 639.9 1591.2 663.5 1594.2 663.5C1597.2 663.5 1600.2 639.5 1603.3 639.5C1606.3 639.5 1609.3 663.5 1612.4 663.5M1621.4 663.5C1624.5 663.5 1627.5 639.9 1630.5 639.9C1633.5 639.9 1636.6 663.5 1639.6 663.5C1642.6 663.5 1645.6 639.9 1648.7 639.9C1651.7 639.9 1654.7 663.5 1657.7 663.5C1660.8 663.5 1663.8 616.0 1666.8 616.0C1669.8 616.0 1672.9 663.5 1675.9 663.5C1678.9 663.5 1682.0 640.5 1685.0 640.5C1688.0 640.5 1691.0 663.5 1694.1 663.5C1697.1 663.5 1700.1 631.6 1703.1 631.6C1706.2 631.6 1709.2 663.5 1712.2 663.5C1715.2 663.5 1718.3 639.9 1721.3 639.9C1724.3 639.9 1727.3 663.5 1730.4 663.5M1739.5 663.5C1742.5 663.5 1745.5 639.5 1748.5 639.5C1751.6 639.5 1754.6 663.5 1757.6 663.5M1766.7 663.5L1775.8 639.9L1784.8 639.5C1787.9 639.5 1790.9 663.5 1793.9 663.5C1796.9 663.5 1800.0 623.8 1803.0 623.8" stroke="#167aab" stroke-width="1.75"/><path d="M341.4 663.5C344.4 663.5 347.4 599.7 350.4 599.7C353.5 599.7 356.5 663.5 359.5 663.5M368.6 663.5C371.6 663.5 374.6 637.8 377.7 637.8C380.7 637.8 383.7 663.5 386.7 663.5M423.1 663.5C426.1 663.5 429.1 615.8 432.1 615.8C435.2 615.8 438.2 663.5 441.2 663.5M468.5 663.5C471.5 663.5 474.5 640.1 477.5 640.1C480.6 640.1 483.6 663.5 486.6 663.5C489.6 663.5 492.7 624.3 495.7 624.3C498.7 624.3 501.7 663.5 504.8 663.5M513.8 663.5L522.9 647.3L532.0 639.9C535.0 639.9 538.1 663.5 541.1 663.5M550.2 663.5C553.2 663.5 556.2 639.9 559.2 639.9C562.3 639.9 565.3 663.5 568.3 663.5C571.3 663.5 574.4 599.5 577.4 599.5C580.4 599.5 583.5 663.5 586.5 663.5M604.6 639.5L613.7 663.5C616.7 663.5 619.8 639.9 622.8 639.9C625.8 639.9 628.8 663.5 631.9 663.5L640.9 647.3L650.0 639.9C653.1 639.9 656.1 663.5 659.1 663.5C662.1 663.5 665.2 649.0 668.2 649.0C671.2 649.0 674.2 663.5 677.3 663.5C680.3 663.5 683.3 639.9 686.3 639.9C689.4 639.9 692.4 663.5 695.4 663.5C698.4 663.5 701.5 616.0 704.5 616.0C707.5 616.0 710.6 663.5 713.6 663.5M749.9 663.5C752.9 663.5 755.9 639.9 759.0 639.9C762.0 639.9 765.0 663.5 768.0 663.5M777.1 663.5C780.2 663.5 783.2 639.9 786.2 639.9C789.2 639.9 792.3 663.5 795.3 663.5M804.4 663.5C807.4 663.5 810.4 639.9 813.4 639.9C816.5 639.9 819.5 663.5 822.5 663.5C825.5 663.5 828.6 639.9 831.6 639.9C834.6 639.9 837.6 663.5 840.7 663.5C843.7 663.5 846.7 607.6 849.8 607.6C852.8 607.6 855.8 663.5 858.8 663.5M877.0 663.5C880.0 663.5 883.0 639.9 886.1 639.9L895.1 647.3L904.2 663.5L913.3 658.4L922.4 639.9C925.4 639.9 928.4 663.5 931.5 663.5C934.5 663.5 937.5 639.9 940.5 639.9C943.6 639.9 946.6 663.5 949.6 663.5C952.6 663.5 955.7 639.9 958.7 639.9L967.8 655.9L976.9 663.5C979.9 663.5 982.9 599.2 985.9 599.2C989.0 599.2 992.0 663.5 995.0 663.5M1013.2 631.6C1016.2 631.6 1019.2 663.5 1022.2 663.5M1058.6 663.5C1061.6 663.5 1064.6 639.9 1067.6 639.9C1070.7 639.9 1073.7 663.5 1076.7 663.5C1079.7 663.5 1082.8 647.8 1085.8 647.8C1088.8 647.8 1091.8 663.5 1094.9 663.5M1167.5 663.5C1170.5 663.5 1173.6 639.1 1176.6 639.1C1179.6 639.1 1182.6 663.5 1185.7 663.5M1231.1 663.5C1234.1 663.5 1237.1 632.0 1240.1 632.0C1243.2 632.0 1246.2 663.5 1249.2 663.5M1258.3 663.5C1261.3 663.5 1264.3 623.4 1267.4 623.4M1285.5 640.5C1288.6 640.5 1291.6 663.5 1294.6 663.5M1303.7 663.5C1306.7 663.5 1309.7 639.9 1312.8 639.9C1315.8 639.9 1318.8 663.5 1321.8 663.5C1324.9 663.5 1327.9 639.9 1330.9 639.9C1333.9 639.9 1337.0 663.5 1340.0 663.5C1343.0 663.5 1346.0 649.0 1349.1 649.0C1352.1 649.0 1355.1 663.5 1358.2 663.5C1361.2 663.5 1364.2 639.9 1367.2 639.9C1370.3 639.9 1373.3 663.5 1376.3 663.5C1379.3 663.5 1382.4 616.0 1385.4 616.0C1388.4 616.0 1391.4 663.5 1394.5 663.5C1397.5 663.5 1400.5 632.0 1403.5 632.0M1421.7 631.6L1430.8 650.9L1439.9 663.5M1494.3 663.5C1497.4 663.5 1500.4 639.9 1503.4 639.9C1506.4 639.9 1509.5 663.5 1512.5 663.5C1515.5 663.5 1518.5 624.3 1521.6 624.3C1524.6 624.3 1527.6 663.5 1530.6 663.5L1539.7 647.3M1557.9 663.5C1560.9 663.5 1563.9 655.9 1567.0 655.9C1570.0 655.9 1573.0 663.5 1576.0 663.5C1579.1 663.5 1582.1 639.9 1585.1 639.9C1588.1 639.9 1591.2 663.5 1594.2 663.5C1597.2 663.5 1600.2 639.5 1603.3 639.5C1606.3 639.5 1609.3 663.5 1612.4 663.5M1621.4 663.5C1624.5 663.5 1627.5 639.9 1630.5 639.9C1633.5 639.9 1636.6 663.5 1639.6 663.5C1642.6 663.5 1645.6 639.9 1648.7 639.9C1651.7 639.9 1654.7 663.5 1657.7 663.5C1660.8 663.5 1663.8 616.0 1666.8 616.0C1669.8 616.0 1672.9 663.5 1675.9 663.5M1703.1 631.6L1712.2 663.5C1715.2 663.5 1718.3 639.9 1721.3 639.9C1724.3 639.9 1727.3 663.5 1730.4 663.5M1739.5 663.5C1742.5 663.5 1745.5 639.5 1748.5 639.5C1751.6 639.5 1754.6 663.5 1757.6 663.5M1766.7 663.5L1775.8 639.9L1784.8 639.5C1787.9 639.5 1790.9 663.5 1793.9 663.5C1796.9 663.5 1800.0 623.8 1803.0 623.8" stroke="#0e7a8e" stroke-width="1.85"/><path d="M323 663.7H1802" stroke="#f0ca5e" stroke-width="2.8"/><path d="M323.2 665.0L332.3 665.0L341.4 665.0L350.4 665.0L359.5 665.0L368.6 665.0L377.7 665.0L386.7 665.0L395.8 665.0L404.9 665.0L414.0 665.0L423.1 665.0L432.1 665.0L441.2 665.0L450.3 665.0L459.4 665.0L468.5 665.0L477.5 665.0L486.6 665.0L495.7 665.0L504.8 665.0L513.8 665.0L522.9 665.0L532.0 665.0L541.1 665.0L550.2 665.0L559.2 665.0L568.3 665.0L577.4 665.0L586.5 665.0L595.6 665.0L604.6 665.0L613.7 665.0L622.8 665.0L631.9 665.0L640.9 665.0L650.0 665.0L659.1 665.0M677.3 665.0L686.3 665.0L695.4 665.0L704.5 665.0L713.6 665.0L722.7 665.0L731.7 665.0L740.8 665.0L749.9 665.0L759.0 665.0L768.0 665.0L777.1 665.0L786.2 665.0L795.3 665.0L804.4 665.0L813.4 665.0L822.5 665.0L831.6 665.0L840.7 665.0L849.8 665.0L858.8 665.0L867.9 665.0L877.0 665.0L886.1 665.0L895.1 665.0L904.2 665.0L913.3 665.0L922.4 665.0L931.5 665.0L940.5 665.0L949.6 665.0L958.7 665.0L967.8 665.0L976.9 665.0L985.9 665.0L995.0 665.0L1004.1 665.0L1013.2 665.0L1022.2 665.0L1031.3 665.0L1040.4 665.0L1049.5 665.0L1058.6 665.0L1067.6 665.0L1076.7 665.0L1085.8 665.0L1094.9 665.0L1104.0 665.0L1113.0 665.0L1122.1 665.0L1131.2 665.0L1140.3 665.0L1149.3 665.0L1158.4 665.0L1167.5 665.0L1176.6 665.0L1185.7 665.0L1194.7 665.0L1203.8 665.0L1212.9 665.0L1222.0 665.0L1231.1 665.0L1240.1 665.0L1249.2 665.0L1258.3 665.0L1267.4 665.0L1276.4 665.0L1285.5 665.0L1294.6 665.0L1303.7 665.0L1312.8 665.0L1321.8 665.0L1330.9 665.0L1340.0 665.0L1349.1 665.0L1358.2 665.0L1367.2 665.0L1376.3 665.0M1394.5 665.0L1403.5 665.0L1412.6 665.0L1421.7 665.0L1430.8 665.0L1439.9 665.0L1448.9 665.0L1458.0 665.0L1467.1 665.0L1476.2 665.0L1485.3 665.0L1494.3 665.0L1503.4 665.0L1512.5 665.0L1521.6 665.0L1530.6 665.0L1539.7 665.0L1548.8 665.0L1557.9 665.0L1567.0 665.0L1576.0 665.0L1585.1 665.0L1594.2 665.0L1603.3 665.0L1612.4 665.0L1621.4 665.0L1630.5 665.0L1639.6 665.0L1648.7 665.0L1657.7 665.0L1666.8 665.0L1675.9 665.0L1685.0 665.0L1694.1 665.0L1703.1 665.0L1712.2 665.0L1721.3 665.0L1730.4 665.0L1739.5 665.0L1748.5 665.0L1757.6 665.0L1766.7 665.0L1775.8 665.0L1784.8 665.0" stroke="#a6d0d6" stroke-width="1.8"/><path d="M659.1 665.0C662.1 665.0 665.2 651.8 668.2 651.8C671.2 651.8 674.2 665.0 677.3 665.0M1376.3 665.0C1379.3 665.0 1382.4 182.0 1385.4 182.0C1388.4 182.0 1391.4 665.0 1394.5 665.0M1784.8 665.0C1787.9 665.0 1790.9 637.2 1793.9 637.2C1796.9 637.2 1800.0 665.0 1803.0 665.0" stroke="#8fcbe4" stroke-width="1.4"/></g><g font-family="'Liberation Sans', sans-serif" font-size="12" fill="#1a1a1a"><text x="320" y="604.6" text-anchor="end">0.05</text><text x="320" y="541.4" text-anchor="end">0.1</text><text x="320" y="478.2" text-anchor="end">0.15</text><text x="320" y="415.0" text-anchor="end">0.2</text><text x="320" y="351.8" text-anchor="end">0.25</text><text x="320" y="288.6" text-anchor="end">0.3</text><text x="320" y="225.4" text-anchor="end">0.35</text><text x="320" y="668" text-anchor="end">0</text><text x="1806.6" y="668.1">0</text><text x="1806.6" y="638.8">2</text><text x="1806.6" y="609.6">4</text><text x="1806.6" y="580.3">6</text><text x="1806.6" y="551.0">8</text><text x="1806.6" y="521.7">10</text><text x="1806.6" y="492.5">12</text><text x="1806.6" y="463.2">14</text><text x="1806.6" y="433.9">16</text><text x="1806.6" y="404.6">18</text><text x="1806.6" y="375.4">20</text><text x="1806.6" y="346.1">22</text><text x="1806.6" y="316.8">24</text><text x="1806.6" y="287.5">26</text><text x="1806.6" y="258.3">28</text><text x="1806.6" y="229.0">30</text><text x="1806.6" y="199.7">32</text><text x="435.1" y="679.3" text-anchor="middle">08:50</text><text x="525.9" y="679.3" text-anchor="middle">08:53</text><text x="616.7" y="679.3" text-anchor="middle">08:56</text><text x="707.5" y="679.3" text-anchor="middle">09:00</text><text x="798.3" y="679.3" text-anchor="middle">09:03</text><text x="889.1" y="679.3" text-anchor="middle">09:06</text><text x="979.9" y="679.3" text-anchor="middle">09:10</text><text x="1070.7" y="679.3" text-anchor="middle">09:13</text><text x="1161.5" y="679.3" text-anchor="middle">09:16</text><text x="1252.3" y="679.3" text-anchor="middle">09:20</text><text x="1343.1" y="679.3" text-anchor="middle">09:23</text><text x="1433.9" y="679.3" text-anchor="middle">09:26</text><text x="1524.7" y="679.3" text-anchor="middle">09:30</text><text x="1615.5" y="679.3" text-anchor="middle">09:33</text><text x="1706.3" y="679.3" text-anchor="middle">09:36</text><text x="323" y="679.3" text-anchor="middle" font-weight="bold">08:45</text><text x="1803" y="679.3" text-anchor="middle" font-weight="bold">09:40</text><text x="1063" y="701.3" text-anchor="middle">时间</text><text transform="translate(273,424) rotate(-90)" text-anchor="middle">数据速率 (MB/s)</text><text transform="translate(1865.5,423.5) rotate(90)" text-anchor="middle">延迟 (ms)</text></g></svg>

<!-- splitter -->
<div class="abs" style="left:258px;top:712px;width:1620px;height:1px;background:#a9b6c3"></div>
<div class="abs" style="left:1068px;top:710px;width:23px;height:1px;background:#c5ccd4"></div>
<div class="abs" style="left:1068px;top:714px;width:23px;height:1px;background:#c5ccd4"></div>

<!-- grid -->
<div class="abs" id="grid">
 <div class="abs" id="gh"></div>
 <div class="row alt" style="top:33px"><div class="sw" style="background:#6cb33f"></div><div class="c" style="left:25px">磁盘总体使用情况</div><div class="c" style="left:809px">MB/s</div><div class="c" style="left:970px">0.03</div><div class="c" style="left:1130px">0.38</div><div class="c" style="left:1291px">0</div><div class="c" style="left:1451px">0.06</div></div>
 <div class="row" style="top:57px"><div class="sw" style="background:#0f3a75"></div><div class="c" style="left:25px">总读取速率</div><div class="c" style="left:809px">MB/s</div><div class="c" style="left:970px">0.01</div><div class="c" style="left:1130px">0.26</div><div class="c" style="left:1291px">0</div><div class="c" style="left:1451px">0.03</div></div>
 <div class="row alt" style="top:81px"><div class="sw" style="background:#0e8fd3"></div><div class="c" style="left:25px">总写入速率</div><div class="c" style="left:809px">MB/s</div><div class="c" style="left:970px">0.01</div><div class="c" style="left:1130px">0.17</div><div class="c" style="left:1291px">0</div><div class="c" style="left:1451px">0.03</div></div>
 <div class="row" style="top:105px"><div class="sw" style="background:#8ecbe3"></div><div class="c" style="left:25px">最长延迟</div><div class="c" style="left:809px">ms</div><div class="c" style="left:970px">0.22</div><div class="c" style="left:1130px">33</div><div class="c" style="left:1291px">0</div><div class="c" style="left:1451px">0</div></div>
 <div class="vl" style="left:801px"></div><div class="vl" style="left:962px"></div><div class="vl" style="left:1122px"></div><div class="vl" style="left:1282px"></div><div class="vl" style="left:1443px"></div><div class="abs" style="left:1604px;top:33px;width:14px;height:100px;background:#f2f2f2"></div><div class="row alt" style="top:129px;height:4px"></div><div class="vl" style="left:1603px;top:33px;height:100px"></div>
 <div class="hc" style="left:7px">名称</div><div class="hc" style="left:809px">单位</div><div class="hc" style="left:970px">平均值</div><div class="hc" style="left:1130px">最大值</div><div class="hc" style="left:1291px">最小值</div><div class="hc" style="left:1451px">最新值</div>
 <svg class="chev" style="left:786px"><path d="M1 2l3.500 3.500L8 2" fill="none" stroke="#444" stroke-width="1.300"/></svg>
 <svg class="chev" style="left:946px"><path d="M1 2l3.500 3.500L8 2" fill="none" stroke="#444" stroke-width="1.300"/></svg>
 <svg class="chev" style="left:1107px"><path d="M1 2l3.500 3.500L8 2" fill="none" stroke="#444" stroke-width="1.300"/></svg>
 <svg class="chev" style="left:1267px"><path d="M1 2l3.500 3.500L8 2" fill="none" stroke="#444" stroke-width="1.300"/></svg>
 <svg class="chev" style="left:1427px"><path d="M1 2l3.500 3.500L8 2" fill="none" stroke="#444" stroke-width="1.300"/></svg>
 <svg class="chev" style="left:1588px"><path d="M1 2l3.500 3.500L8 2" fill="none" stroke="#444" stroke-width="1.300"/></svg>
 <div class="abs" style="left:1607px;top:37px;width:7.5px;height:43px;border-radius:4px;background:#c6c7c9"></div>
 <div class="abs" id="gf"></div>
 <div class="t" style="left:1580px;top:143px;font-weight:bold;color:#333">8 项</div>
 <svg class="abs" style="left:1607px;top:151px" width="9" height="9"><path d="M8 1L1 8M8 3.500L3.500 8M8 6L6 8" stroke="#555" stroke-width="1.100"/></svg>
</div>

<!-- recent tasks -->
<div class="abs" id="tasks"></div>
<svg class="abs" style="left:243px;top:926px" width="14" height="17" viewBox="0 0 14 17"><rect x="1.500" y="3.500" width="11" height="12.500" rx="1" fill="#eef6fc" stroke="#5b9bd5"/><path d="M4.500 3.500l2.500-2.500 2.500 2.500z" fill="#cfe3f5" stroke="#5b9bd5" stroke-width=".8"/><path d="M4 8l1.500 1.500L8.500 6.500M4 12l1.500 1.500L8.500 10.500" fill="none" stroke="#2c9a3a" stroke-width="1.400"/></svg>
<div class="t" style="left:263px;top:928px;color:#333">近期任务</div>
</body>
</html>
